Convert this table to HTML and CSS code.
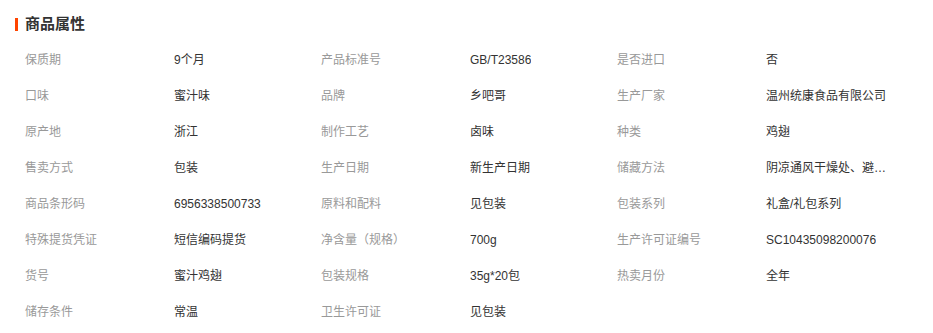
FILE: index.html
```html
<!DOCTYPE html>
<html lang="zh-CN">
<head>
<meta charset="utf-8">
<title>商品属性</title>
<link rel="stylesheet" href="styles.css">
</head>
<body>
<section class="attrs">
  <h2 class="attrs-title"><span class="bar"></span>商品属性</h2>
  <ul class="attrs-grid">
    <li class="item"><span class="label">保质期</span><span class="value">9个月</span></li>
    <li class="item"><span class="label">产品标准号</span><span class="value">GB/T23586</span></li>
    <li class="item"><span class="label">是否进口</span><span class="value">否</span></li>
    <li class="item"><span class="label">口味</span><span class="value">蜜汁味</span></li>
    <li class="item"><span class="label">品牌</span><span class="value">乡吧哥</span></li>
    <li class="item"><span class="label">生产厂家</span><span class="value">温州统康食品有限公司</span></li>
    <li class="item"><span class="label">原产地</span><span class="value">浙江</span></li>
    <li class="item"><span class="label">制作工艺</span><span class="value">卤味</span></li>
    <li class="item"><span class="label">种类</span><span class="value">鸡翅</span></li>
    <li class="item"><span class="label">售卖方式</span><span class="value">包装</span></li>
    <li class="item"><span class="label">生产日期</span><span class="value">新生产日期</span></li>
    <li class="item"><span class="label">储藏方法</span><span class="value">阴凉通风干燥处、避光保存</span></li>
    <li class="item"><span class="label">商品条形码</span><span class="value">6956338500733</span></li>
    <li class="item"><span class="label">原料和配料</span><span class="value">见包装</span></li>
    <li class="item"><span class="label">包装系列</span><span class="value">礼盒/礼包系列</span></li>
    <li class="item"><span class="label">特殊提货凭证</span><span class="value">短信编码提货</span></li>
    <li class="item"><span class="label">净含量（规格）</span><span class="value">700g</span></li>
    <li class="item"><span class="label">生产许可证编号</span><span class="value">SC10435098200076</span></li>
    <li class="item"><span class="label">货号</span><span class="value">蜜汁鸡翅</span></li>
    <li class="item"><span class="label">包装规格</span><span class="value">35g*20包</span></li>
    <li class="item"><span class="label">热卖月份</span><span class="value">全年</span></li>
    <li class="item"><span class="label">储存条件</span><span class="value">常温</span></li>
    <li class="item"><span class="label">卫生许可证</span><span class="value">见包装</span></li>
  </ul>
</section>
</body>
</html>
```

FILE: styles.css
```css
* { box-sizing: border-box; }
html, body { margin: 0; padding: 0; background: #fff; }
body {
  font-family: "Liberation Sans", "Noto Sans CJK SC", sans-serif;
  font-size: 12px;
  color: #333;
}
.attrs { padding: 14px 0 0 15px; }
.attrs-title {
  display: flex;
  align-items: center;
  gap: 7px;
  margin: 0 0 8px;
  height: 20px;
  font-size: 15px;
  font-weight: bold;
  color: #333;
  line-height: 20px;
}
.bar {
  display: block;
  width: 3px;
  height: 13px;
  background: #ff4400;
}
.attrs-grid {
  list-style: none;
  margin: 0 0 0 10px;
  padding: 0;
  display: grid;
  grid-template-columns: repeat(3, 296px);
}
.item {
  display: flex;
  height: 36px;
  line-height: 36px;
}
.label {
  width: 149px;
  flex: none;
  color: #999;
  white-space: nowrap;
}
.value {
  max-width: 123px;
  color: #333;
  white-space: nowrap;
  overflow: hidden;
  text-overflow: ellipsis;
}
```
